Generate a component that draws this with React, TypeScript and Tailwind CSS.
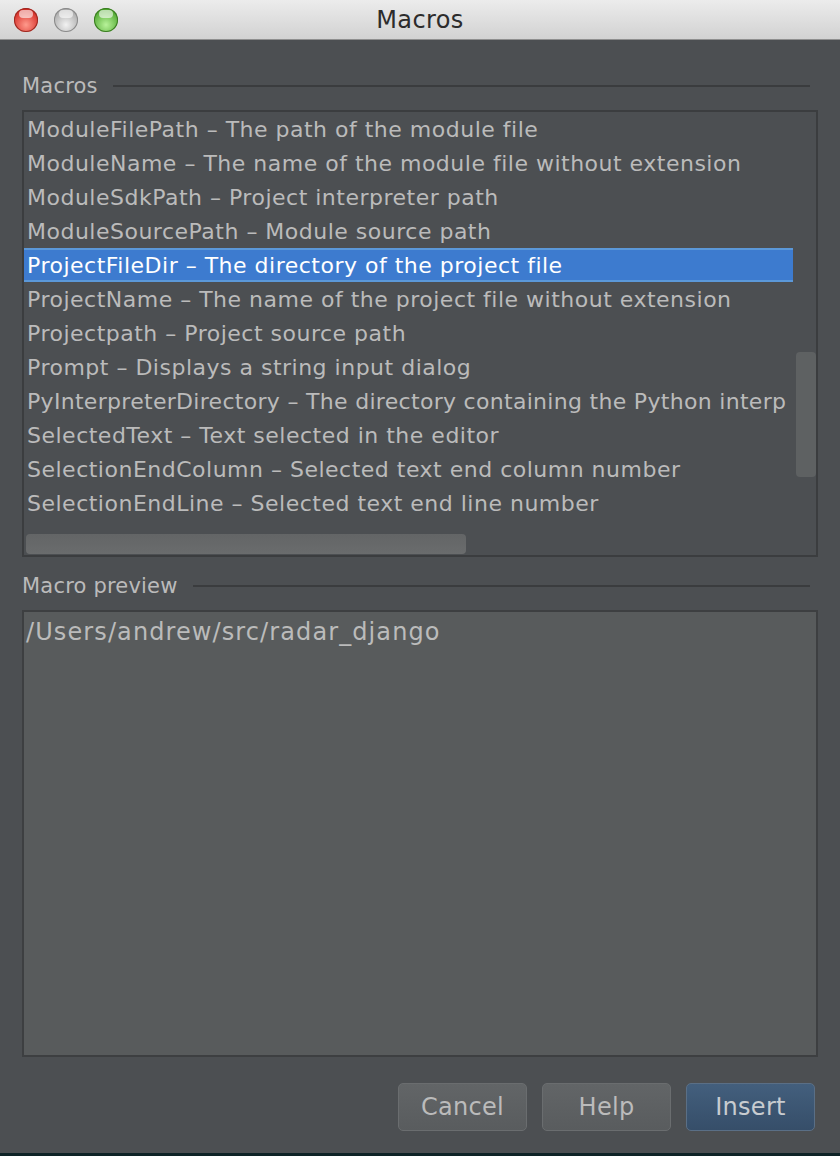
import React from "react";

const rows = [
  "ModuleFilePath – The path of the module file",
  "ModuleName – The name of the module file without extension",
  "ModuleSdkPath – Project interpreter path",
  "ModuleSourcePath – Module source path",
  "ProjectFileDir – The directory of the project file",
  "ProjectName – The name of the project file without extension",
  "Projectpath – Project source path",
  "Prompt – Displays a string input dialog",
  "PyInterpreterDirectory – The directory containing the Python interp",
  "SelectedText – Text selected in the editor",
  "SelectionEndColumn – Selected text end column number",
  "SelectionEndLine – Selected text end line number",
  "SelectionStartColumn – Selected text start column number",
];

function Light({ from, to, border }: { from: string; to: string; border: string }) {
  return (
    <div
      className="w-[24px] h-[24px] rounded-full"
      style={{
        background: `radial-gradient(circle at 50% 70%, ${to} 0%, ${from} 75%)`,
        boxShadow: `inset 0 0 0 1px ${border}`,
      }}
    >
      <div className="mx-auto mt-[2px] w-[14px] h-[8px] rounded-full bg-white/60" />
    </div>
  );
}

function Header({ label }: { label: string }) {
  return (
    <div className="flex items-center h-[20px] gap-[15px] pr-[8px]">
      <span className="text-[21px] leading-none text-[#bbbbbb] tracking-[0.2px]">{label}</span>
      <div className="flex-1 h-[2px] bg-[#3a3c3e]" />
    </div>
  );
}

export default function App() {
  return (
    <div
      className="w-[840px] h-[1156px] bg-[#4c4f52] flex flex-col overflow-hidden"
      style={{ fontFamily: '"DejaVu Sans", sans-serif' }}
    >
      {/* title bar */}
      <div className="h-[40px] shrink-0 flex items-center relative bg-gradient-to-b from-[#ececec] to-[#d2d2d2] border-b border-[#8f8f8f]">
        <div className="flex items-center gap-[16px] pl-[14px]">
          <Light from="#d42a24" to="#ff9a8c" border="#9a2a22" />
          <Light from="#a9a9a9" to="#f2f2f2" border="#8a8a8a" />
          <Light from="#4ea72e" to="#b8f29a" border="#3a7a22" />
        </div>
        <div className="absolute inset-0 flex items-center justify-center text-[24px] tracking-[0.4px] text-[#2c2c2c]">
          Macros
        </div>
      </div>

      <div className="px-[22px] flex flex-col">
        <div className="mt-[36px]">
          <Header label="Macros" />
        </div>

        {/* list */}
        <div className="mt-[14px] h-[447px] border-2 border-[#3b3d3f] flex flex-col">
          <div className="flex h-[417px]">
            <div className="w-[771px] overflow-hidden">
              {rows.map((r, i) => (
                <div
                  key={i}
                  className={
                    "h-[34px] flex items-center pl-[3px] whitespace-nowrap text-[22px] " +
                    (i === 8 ? "tracking-[0.3px] " : "tracking-[0.5px] ") +
                    (i === 4
                      ? "bg-[#3d7bcf] text-white border-y-2 border-[#5b98d9] w-[770px]"
                      : "text-[#bbbbbb]")
                  }
                >
                  {r}
                </div>
              ))}
            </div>
            <div className="flex-1">
              <div className="ml-[3px] mt-[240px] w-[20px] h-[125px] rounded-[4px] bg-[#5e6162]" />
            </div>
          </div>
          <div className="flex-1">
            <div className="ml-[2px] mt-[5px] w-[440px] h-[20px] rounded-[4px] bg-gradient-to-b from-[#636566] to-[#6a6c6d]" />
          </div>
        </div>

        <div className="mt-[19px]">
          <Header label="Macro preview" />
        </div>

        {/* preview */}
        <div className="mt-[14px] h-[447px] border-2 border-[#3d3f41] bg-[#585b5c]">
          <div className="pl-[2px] pt-[2px] text-[24px] text-[#bbbbbb] tracking-[1.1px]">
            /Users/andrew/src/radar_django
          </div>
        </div>

        {/* buttons */}
        <div className="mt-[26px] flex justify-end gap-[15px] pr-[3px]">
          <button className="w-[129px] h-[48px] rounded-[5px] border border-[#6a6d6f] bg-gradient-to-b from-[#626567] to-[#595c5e] text-[24px] tracking-[0.3px] text-[#bbbbbb]">
            Cancel
          </button>
          <button className="w-[129px] h-[48px] rounded-[5px] border border-[#6a6d6f] bg-gradient-to-b from-[#626567] to-[#595c5e] text-[24px] tracking-[0.3px] text-[#bbbbbb]">
            Help
          </button>
          <button className="w-[129px] h-[48px] rounded-[5px] border border-[#5a6f86] bg-gradient-to-b from-[#435f7d] to-[#364e69] text-[24px] tracking-[0.3px] text-[#c8ccd0]">
            Insert
          </button>
        </div>
      </div>

      <div className="mt-auto h-[3px] bg-[#0e2326]" />
    </div>
  );
}
